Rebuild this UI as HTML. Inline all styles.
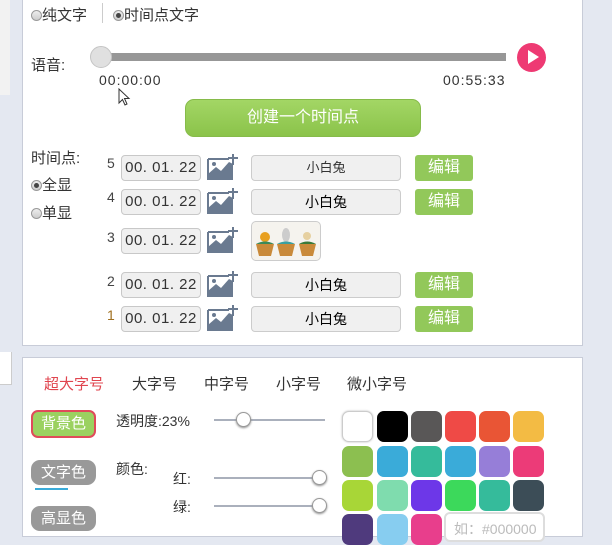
<!DOCTYPE html>
<html><head><meta charset="utf-8"><style>
*{margin:0;padding:0;box-sizing:border-box}
body{width:612px;height:527px;overflow:hidden;background:#e4e8f1;position:relative;font-family:"Liberation Sans","Noto Sans CJK SC",sans-serif;color:#333;font-size:14px}
.a{position:absolute;white-space:nowrap}
.panel{position:absolute;background:#fff;border:1px solid #c8ccd8}
.radio{display:inline-block;width:11px;height:11px;border-radius:50%;border:1px solid #999;background:linear-gradient(#eee,#ccc);vertical-align:-1px;position:relative}
.radio.on::after{content:"";position:absolute;left:2px;top:2px;width:5px;height:5px;border-radius:50%;background:#444}
.inp{position:absolute;width:80px;height:26px;border:1px solid #c8c8c8;border-radius:4px;background:#f0f0f0;font-size:15px;color:#333;text-align:center;line-height:24px;letter-spacing:.5px}
.name{position:absolute;width:150px;height:26px;border:1px solid #ccc;border-radius:4px;background:#f0f0f0;font-size:14px;text-align:center;line-height:24px;color:#000}
.edit{position:absolute;width:58px;height:26px;background:#92c85a;border-radius:3px;color:#fff;font-size:16px;text-align:center;line-height:26px}
.num{position:absolute;font-size:14px;color:#444}
.sw{position:absolute;width:31px;height:31px;border-radius:7px}
.sl{position:absolute;height:2px;background:#aab0bc}
.th{position:absolute;width:15px;height:15px;border-radius:50%;background:#fff;border:1px solid #999;box-shadow:0 1px 2px #888}
</style></head><body>
<div class="a" style="left:0;top:0;width:10px;height:95px;background:#f2f2f2"></div>
<div class="a" style="left:0;top:352px;width:12px;height:33px;background:#fff;border-right:1px solid #ccc;border-bottom:1px solid #ccc"></div>

<div class="panel" style="left:22px;top:-2px;width:561px;height:348px"></div>
<div class="a" style="left:31px;top:4px;font-size:15px"><span class="radio"></span>纯文字</div>
<div class="a" style="left:102px;top:3px;width:1px;height:20px;background:#ccc"></div>
<div class="a" style="left:113px;top:4px;font-size:15px"><span class="radio on"></span>时间点文字</div>
<div class="a" style="left:31px;top:54px;font-size:15px">语音:</div>
<div class="a" style="left:110px;top:53px;width:396px;height:8px;background:#979797"></div>
<div class="a" style="left:90px;top:46px;width:22px;height:22px;border-radius:50%;background:#e0e0e0;border:1px solid #c4c4c4"></div>
<div class="a" style="left:517px;top:43px;width:29px;height:29px;border-radius:50%;background:#ee3a73"></div>
<div class="a" style="left:528px;top:50px;width:0;height:0;border-left:11px solid #fff;border-top:7.5px solid transparent;border-bottom:7.5px solid transparent"></div>
<div class="a" style="left:99px;top:72px;font-size:14px;color:#333;letter-spacing:1px">00:00:00</div>
<div class="a" style="left:443px;top:72px;font-size:14px;color:#333;letter-spacing:1px">00:55:33</div>
<svg class="a" style="left:118px;top:88px" width="14" height="20" viewBox="0 0 14 20"><path d="M1 1 L1 15 L4.5 11.5 L7 17 L9 16 L6.5 10.5 L11 10.5 Z" fill="#fff" stroke="#333" stroke-width="1"/></svg>
<div class="a" style="left:185px;top:99px;width:236px;height:38px;border-radius:9px;background:linear-gradient(#a3d665,#8bc34a);border:1px solid #86bb4a;color:#fff;font-size:16px;text-align:center;line-height:36px">创建一个时间点</div>

<div class="a" style="left:31px;top:147px;font-size:15px">时间点:</div>
<div class="a" style="left:31px;top:174px;font-size:15px"><span class="radio on"></span>全显</div>
<div class="a" style="left:31px;top:202px;font-size:15px"><span class="radio"></span>单显</div>

<svg width="0" height="0" style="position:absolute"><defs><g id="ic"><path d="M1 26 V5 M1 5 H22" stroke="#6a7a90" stroke-width="2" fill="none"/><path d="M1 26 L1 20 L9 13 L14 17 L22 8 L26 10 L26 26 Z" fill="#6a7a90"/><circle cx="7" cy="10" r="2" fill="#6a7a90"/><path d="M26 0 V11 M21 4 H31" stroke="#6a7a90" stroke-width="2"/></g></defs></svg>

<div class="num" style="left:107px;top:155px">5</div>
<div class="inp" style="left:121px;top:155px">00. 01. 22</div>
<svg class="a" style="left:207px;top:154px" width="32" height="27"><use href="#ic"/></svg>
<div class="name" style="left:251px;top:155px;color:#333;font-size:13px">小白兔</div>
<div class="edit" style="left:415px;top:155px">编辑</div>

<div class="num" style="left:107px;top:189px">4</div>
<div class="inp" style="left:121px;top:189px">00. 01. 22</div>
<svg class="a" style="left:207px;top:188px" width="32" height="27"><use href="#ic"/></svg>
<div class="name" style="left:251px;top:189px">小白兔</div>
<div class="edit" style="left:415px;top:189px">编辑</div>

<div class="num" style="left:107px;top:229px">3</div>
<div class="inp" style="left:121px;top:228px">00. 01. 22</div>
<svg class="a" style="left:207px;top:227px" width="32" height="27"><use href="#ic"/></svg>
<div class="a" style="left:251px;top:221px;width:70px;height:40px;border:1px solid #ccc;border-radius:5px;background:#f5f3ee"></div>
<svg class="a" style="left:254px;top:224px" width="64" height="34">
<circle cx="11" cy="13" r="5" fill="#e8a020"/><path d="M2 20 H20 L17 32 H5 Z" fill="#c98a3a"/><path d="M2 20 Q11 15 20 20" fill="#3a8a5a"/>
<ellipse cx="32" cy="11" rx="4" ry="7" fill="#ccc"/><path d="M23 20 H41 L38 32 H26 Z" fill="#c98a3a"/><path d="M23 20 Q32 15 41 20" fill="#3aa0a0"/>
<circle cx="53" cy="12" r="4" fill="#e6d0a0"/><path d="M45 20 H62 L59 32 H48 Z" fill="#c98a3a"/><path d="M45 20 Q53 15 62 20" fill="#3a7a3a"/>
</svg>

<div class="num" style="left:107px;top:273px">2</div>
<div class="inp" style="left:121px;top:272px">00. 01. 22</div>
<svg class="a" style="left:207px;top:271px" width="32" height="27"><use href="#ic"/></svg>
<div class="name" style="left:251px;top:272px">小白兔</div>
<div class="edit" style="left:415px;top:272px">编辑</div>

<div class="num" style="left:107px;top:307px;color:#a07020">1</div>
<div class="inp" style="left:121px;top:306px">00. 01. 22</div>
<svg class="a" style="left:207px;top:305px" width="32" height="27"><use href="#ic"/></svg>
<div class="name" style="left:251px;top:306px">小白兔</div>
<div class="edit" style="left:415px;top:306px">编辑</div>

<div class="panel" style="left:22px;top:357px;width:561px;height:180px"></div>
<div class="a" style="left:44px;top:373px;font-size:15px;color:#e0454f">超大字号</div>
<div class="a" style="left:132px;top:373px;font-size:15px">大字号</div>
<div class="a" style="left:204px;top:373px;font-size:15px">中字号</div>
<div class="a" style="left:276px;top:373px;font-size:15px">小字号</div>
<div class="a" style="left:347px;top:373px;font-size:15px">微小字号</div>

<div class="a" style="left:31px;top:410px;width:65px;height:28px;border:2px solid #e04a5a;border-radius:7px;background:#9bd160;color:#fff;text-align:center;line-height:24px;font-size:15px">背景色</div>
<div class="a" style="left:31px;top:460px;width:65px;height:25px;border-radius:9px;background:#999;color:#fff;text-align:center;line-height:25px;font-size:15px">文字色</div>
<div class="a" style="left:35px;top:488px;width:33px;height:2px;background:#3aabd9"></div>
<div class="a" style="left:31px;top:506px;width:65px;height:25px;border-radius:9px;background:#999;color:#fff;text-align:center;line-height:25px;font-size:15px">高显色</div>

<div class="a" style="left:116px;top:411px">透明度:23%</div>
<div class="sl" style="left:214px;top:419px;width:111px"></div>
<div class="th" style="left:236px;top:412px"></div>
<div class="a" style="left:116px;top:459px">颜色:</div>
<div class="a" style="left:173px;top:469px">红:</div>
<div class="sl" style="left:214px;top:477px;width:111px"></div>
<div class="th" style="left:312px;top:470px"></div>
<div class="a" style="left:173px;top:497px">绿:</div>
<div class="sl" style="left:214px;top:505px;width:111px"></div>
<div class="th" style="left:312px;top:498px"></div>

<div class="sw" style="left:342px;top:411px;background:#fff;border:1px solid #ccc;box-shadow:0 0 2px #bbb"></div>
<div class="sw" style="left:377px;top:411px;background:#000"></div>
<div class="sw" style="left:411px;top:411px;background:#595757"></div>
<div class="sw" style="left:445px;top:411px;background:#ef4a46"></div>
<div class="sw" style="left:479px;top:411px;background:#e95535"></div>
<div class="sw" style="left:513px;top:411px;background:#f3bb44"></div>
<div class="sw" style="left:342px;top:446px;background:#8cbf50"></div>
<div class="sw" style="left:377px;top:446px;background:#3aabd9"></div>
<div class="sw" style="left:411px;top:446px;background:#35bb9b"></div>
<div class="sw" style="left:445px;top:446px;background:#3aabd9"></div>
<div class="sw" style="left:479px;top:446px;background:#967ed8"></div>
<div class="sw" style="left:513px;top:446px;background:#ec3b78"></div>
<div class="sw" style="left:342px;top:480px;background:#a8d637"></div>
<div class="sw" style="left:377px;top:480px;background:#7fdcae"></div>
<div class="sw" style="left:411px;top:480px;background:#6d37e8"></div>
<div class="sw" style="left:445px;top:480px;background:#3cd95b"></div>
<div class="sw" style="left:479px;top:480px;background:#35bb9b"></div>
<div class="sw" style="left:513px;top:480px;background:#3c4d57"></div>
<div class="sw" style="left:342px;top:514px;background:#4f3a7d"></div>
<div class="sw" style="left:377px;top:514px;background:#87cdf0"></div>
<div class="sw" style="left:411px;top:514px;background:#e83e8c"></div>
<div class="a" style="left:444px;top:512px;width:101px;height:30px;border:2px solid #ddd;border-radius:6px;background:#fff;color:#bbb;font-size:14px;padding:5px 0 0 8px">如：#000000</div>
</body></html>
